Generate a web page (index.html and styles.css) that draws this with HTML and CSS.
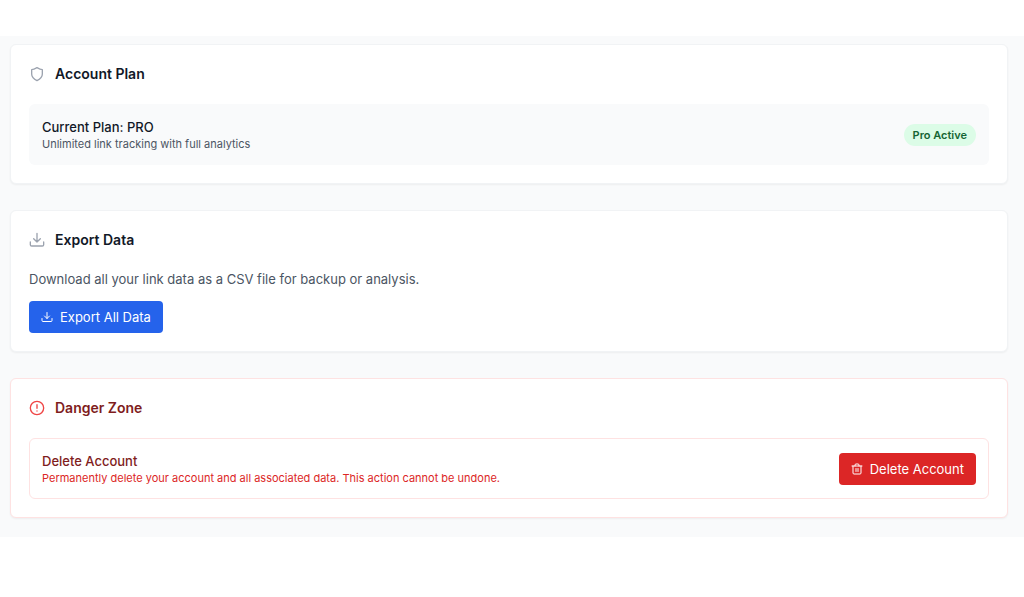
FILE: index.html
```html
<!DOCTYPE html>
<html lang="en">
<head>
<meta charset="utf-8">
<title>Account settings</title>
<link rel="stylesheet" href="styles.css">
</head>
<body>
<main class="settings">
  <section class="card">
    <h2 class="card-title">
      <svg class="icon" viewBox="0 0 24 24" aria-hidden="true"><path d="M12 22s8-4 8-10V5.500C17 5.500 14.500 4 12 2.500C9.500 4 7 5.500 4 5.500V12c0 6 8 10 8 10z"/></svg>
      Account Plan
    </h2>
    <div class="panel panel-plan">
      <div>
        <h3 class="panel-title">Current Plan: PRO</h3>
        <p class="panel-text">Unlimited link tracking with full analytics</p>
      </div>
      <span class="badge">Pro Active</span>
    </div>
  </section>

  <section class="card">
    <h2 class="card-title">
      <svg class="icon" viewBox="0 0 24 24" aria-hidden="true"><path d="M12 2v13M7 10l5 5 5-5M22 15v4a2 2 0 0 1-2 2H4a2 2 0 0 1-2-2v-4"/></svg>
      Export Data
    </h2>
    <p class="description">Download all your link data as a CSV file for backup or analysis.</p>
    <button class="button button-primary" type="button">
      <svg class="icon-small" viewBox="0 0 24 24" aria-hidden="true"><path d="M12 3v12M7 10l5 5 5-5M22 15v4a2 2 0 0 1-2 2H4a2 2 0 0 1-2-2v-4"/></svg>
      Export All Data
    </button>
  </section>

  <section class="card card-danger">
    <h2 class="card-title">
      <svg class="icon" viewBox="0 0 24 24" aria-hidden="true"><circle cx="12" cy="12" r="10"/><path d="M12 7v5.500M12 16.500v.100"/></svg>
      Danger Zone
    </h2>
    <div class="panel panel-danger">
      <div>
        <h3 class="panel-title">Delete Account</h3>
        <p class="panel-text">Permanently delete your account and all associated data. This action cannot be undone.</p>
      </div>
      <button class="button button-danger" type="button">
        <svg class="icon-small" viewBox="0 0 24 24" aria-hidden="true"><path d="M2 6h20M20 6v14a2 2 0 0 1-2 2H6a2 2 0 0 1-2-2V6M8 6V4a2 2 0 0 1 2-2h4a2 2 0 0 1 2 2v2M10 11v6M14 11v6"/></svg>
        Delete Account
      </button>
    </div>
  </section>
</main>
</body>
</html>
```

FILE: styles.css
```css
* {
  box-sizing: border-box;
}

body {
  margin: 0;
  padding-top: 36px;
  background: #ffffff;
  color: #111827;
  font-family: Inter, "Liberation Sans", sans-serif;
}

h2, h3, p {
  margin: 0;
}

.settings {
  display: flex;
  flex-direction: column;
  gap: 26px;
  padding: 8px 16px 19px 10px;
  background: #f9fafb;
}

.card {
  padding: 18px;
  border: 1px solid #f1f3f5;
  border-radius: 6px;
  background: #ffffff;
  box-shadow: 0 1px 2px rgba(0, 0, 0, 0.05);
}

.card-title {
  display: flex;
  align-items: center;
  gap: 10px;
  margin-bottom: 19px;
  font-size: 14px;
  font-weight: 600;
  line-height: 22px;
}

.icon,
.icon-small {
  flex: none;
  fill: none;
  stroke: currentColor;
  stroke-width: 2;
  stroke-linecap: round;
  stroke-linejoin: round;
}

.icon {
  width: 16px;
  height: 16px;
  color: #9ca3af;
}

.icon-small {
  width: 12px;
  height: 12px;
}

.panel {
  display: flex;
  align-items: center;
  justify-content: space-between;
  gap: 16px;
  min-height: 61px;
  padding: 12px 13px;
  border-radius: 6px;
}

.panel-plan {
  background: #f9fafb;
}

.panel-title {
  font-size: 13px;
  font-weight: 500;
  line-height: 18px;
}

.panel-text {
  color: #4b5563;
  font-size: 11px;
  line-height: 16px;
}

.badge {
  padding: 3px 9px;
  border-radius: 12px;
  background: #dcfce7;
  color: #166534;
  font-size: 11px;
  font-weight: 600;
  line-height: 16px;
  white-space: nowrap;
}

.description {
  margin-bottom: 12px;
  color: #4b5563;
  font-size: 13px;
  line-height: 19px;
}

.button {
  display: flex;
  align-items: center;
  gap: 7px;
  padding: 6px 12px;
  border: 0;
  border-radius: 4px;
  color: #ffffff;
  font: 400 13px/20px Inter, "Liberation Sans", sans-serif;
  white-space: nowrap;
  cursor: pointer;
}

.button-primary {
  background: #2563eb;
}

.button-danger {
  background: #dc2626;
}

.card-danger {
  border-color: #fee2e2;
}

.card-danger .card-title,
.card-danger .panel-title {
  color: #7f1d1d;
}

.card-danger .icon {
  color: #ef4444;
}

.panel-danger {
  padding: 12px;
  border: 1px solid #fee2e2;
}

.panel-danger .panel-text {
  color: #dc2626;
}
```
